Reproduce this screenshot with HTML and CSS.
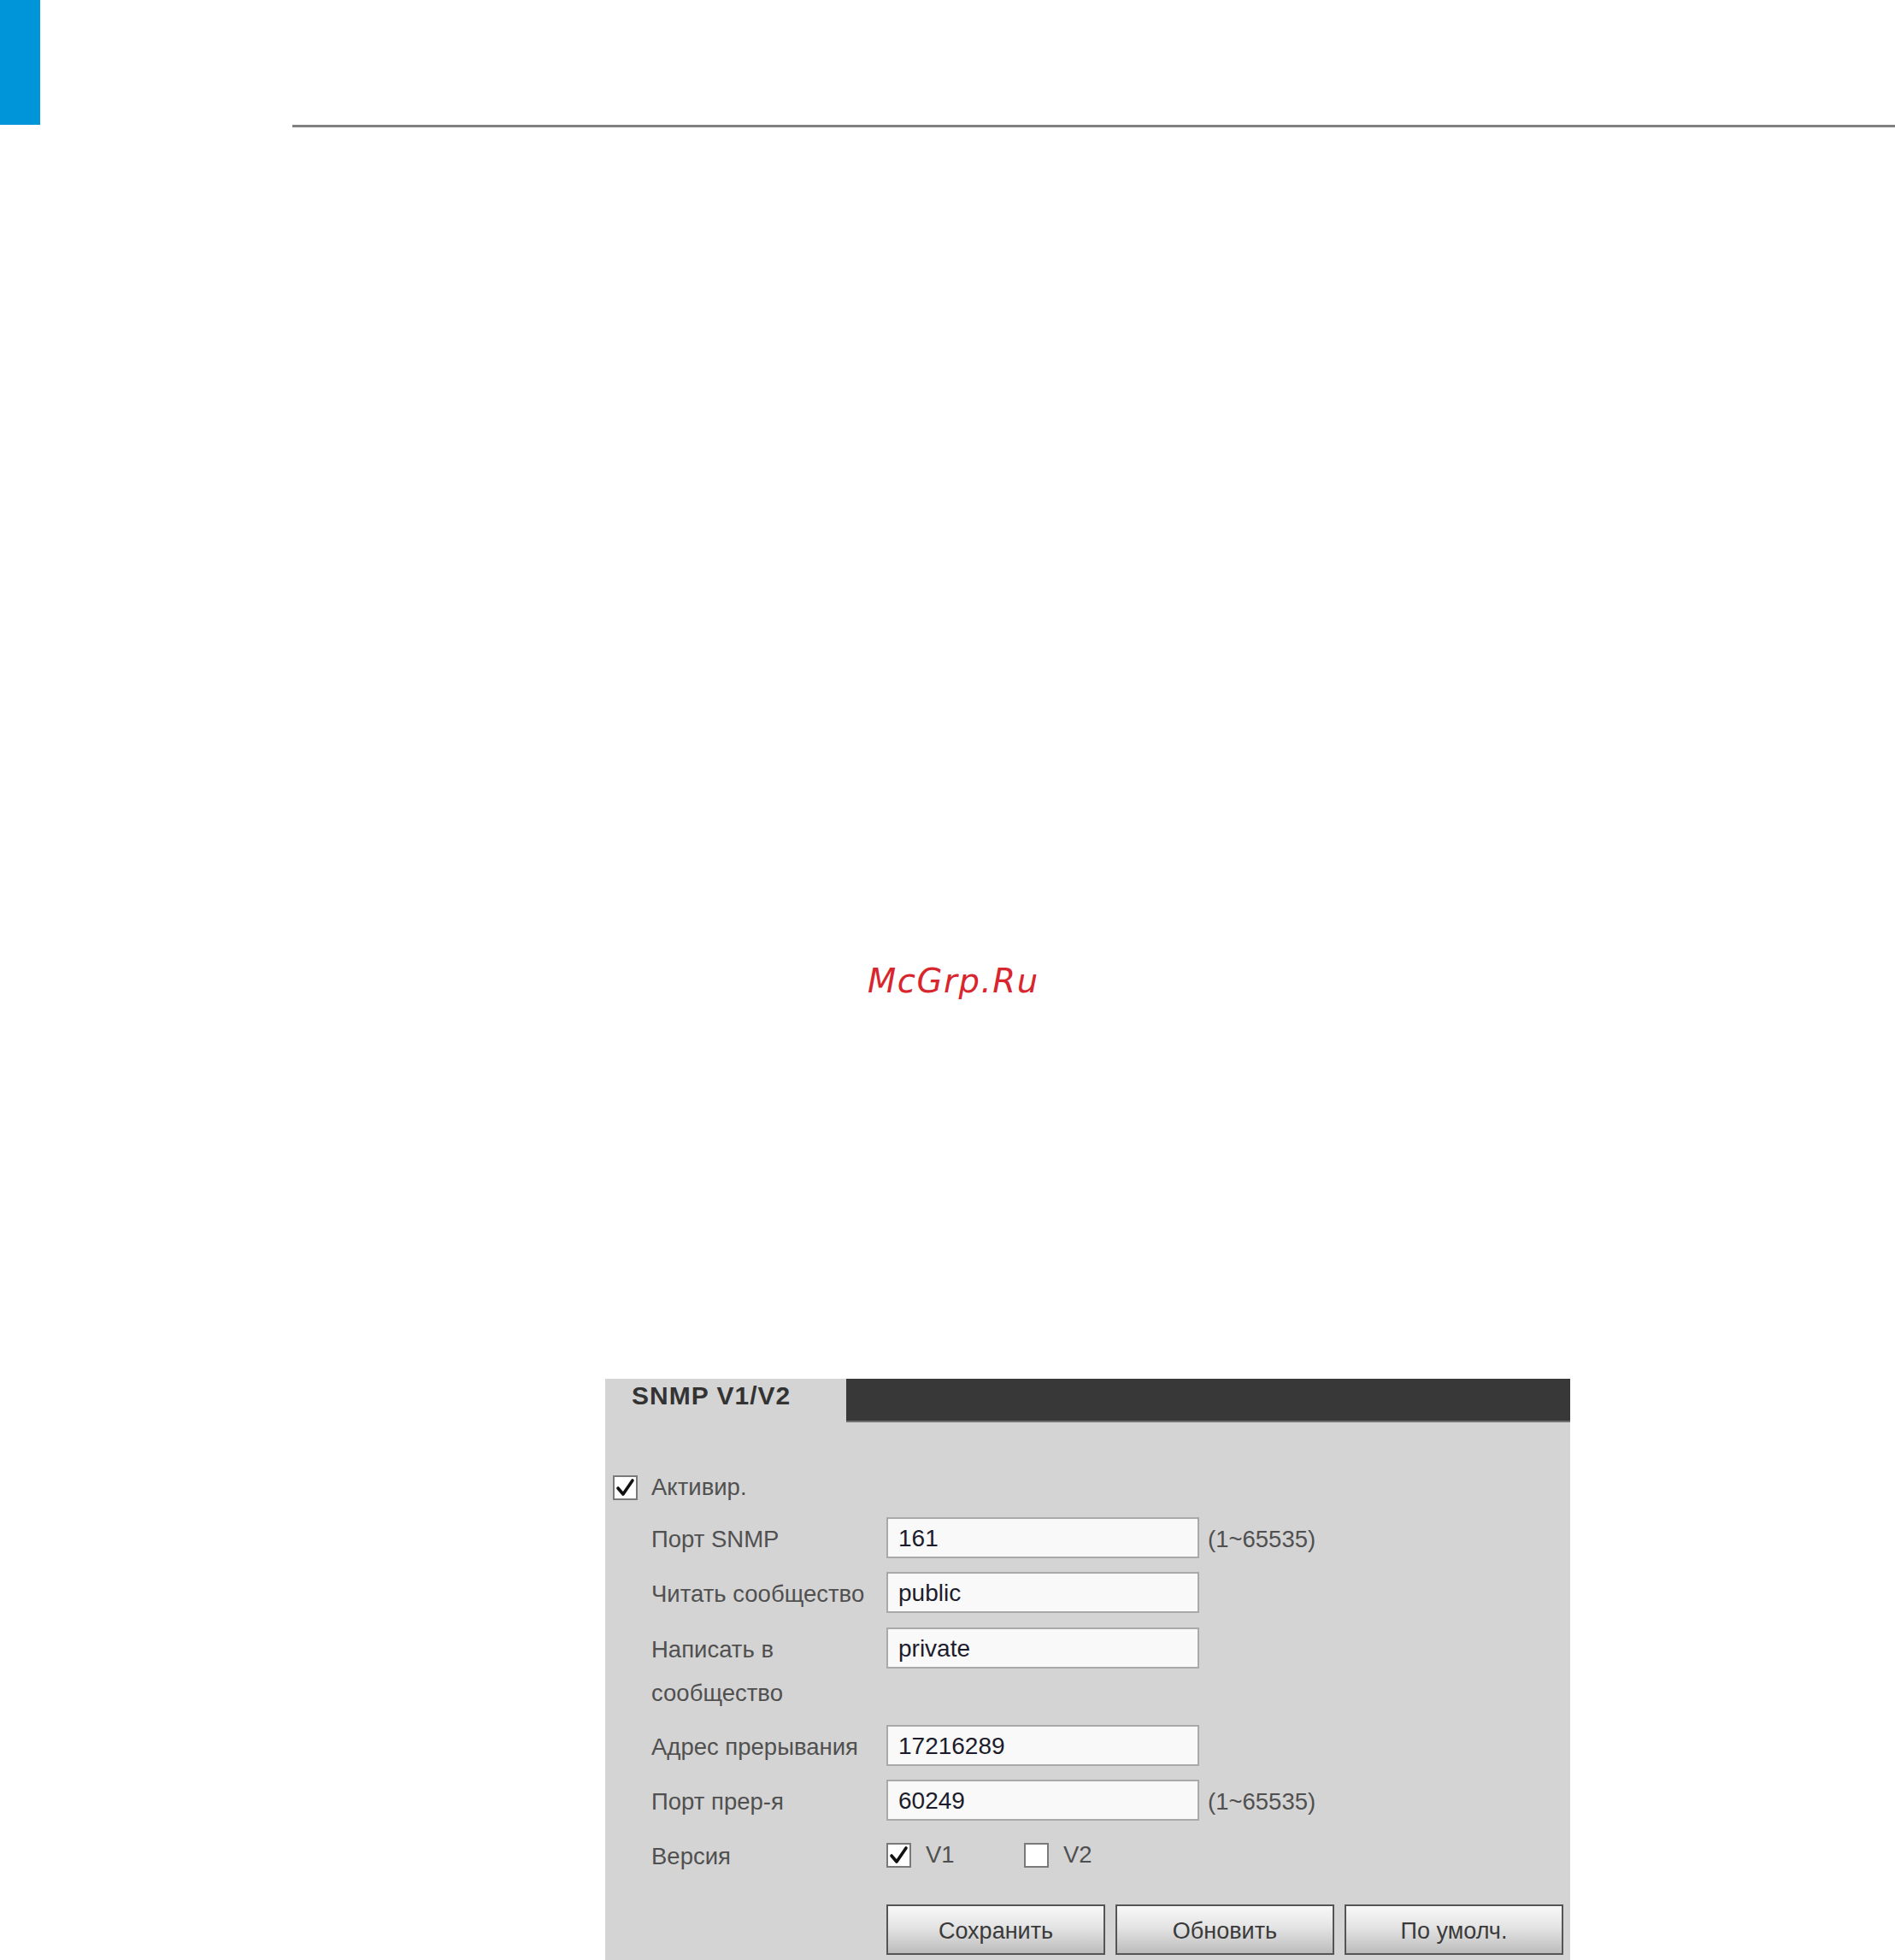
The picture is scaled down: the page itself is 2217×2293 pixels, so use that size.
FILE: index.html
```html
<!DOCTYPE html>
<html lang="ru">
<head>
    <meta charset="UTF-8">
    <title>SNMP V1/V2</title>
    <link rel="stylesheet" href="styles.css">
</head>
<body>
    <div class="header">
        <div class="brand"></div>
        <div class="rule"></div>
    </div>

    <div class="watermark">McGrp.Ru</div>

    <div class="panel">
        <div class="tabs">
            <div class="tab">SNMP V1/V2</div>
            <div class="tab-bar"></div>
        </div>

        <div class="form">
            <label class="enable">
                <span class="check">
                    <svg width="25" height="25" viewBox="0 0 25 25"><path d="M4 13 L10 20 L21 4" fill="none" stroke="#111" stroke-width="3.6" stroke-linecap="round" stroke-linejoin="round"/></svg>
                </span>
                <span>Активир.</span>
            </label>

            <div class="grid">
                <div class="label">Порт SNMP</div>
                <input class="field" type="text" value="161">
                <div class="hint">(1~65535)</div>

                <div class="label">Читать сообщество</div>
                <input class="field" type="text" value="public">
                <div class="hint"></div>

                <div class="label two">Написать в сообщество</div>
                <input class="field" type="text" value="private">
                <div class="hint"></div>

                <div class="label">Адрес прерывания</div>
                <input class="field" type="text" value="17216289">
                <div class="hint"></div>

                <div class="label">Порт прер-я</div>
                <input class="field" type="text" value="60249">
                <div class="hint">(1~65535)</div>

                <div class="label">Версия</div>
                <div class="versions">
                    <label class="option">
                        <span class="check">
                            <svg width="25" height="25" viewBox="0 0 25 25"><path d="M4 13 L10 20 L21 4" fill="none" stroke="#111" stroke-width="3.6" stroke-linecap="round" stroke-linejoin="round"/></svg>
                        </span>
                        <span>V1</span>
                    </label>
                    <label class="option">
                        <span class="check"></span>
                        <span>V2</span>
                    </label>
                </div>
                <div class="hint"></div>

                <div class="buttons">
                    <button class="btn">Сохранить</button>
                    <button class="btn">Обновить</button>
                    <button class="btn">По умолч.</button>
                </div>
            </div>
        </div>
    </div>
</body>
</html>
```

FILE: styles.css
```css
body {
    margin: 0;
    background: #fff;
    font-family: "Liberation Sans", Arial, sans-serif;
}
.header {
    display: flex;
    align-items: flex-start;
    height: 149px;
}
.brand {
    width: 47px;
    height: 146px;
    background: #0095d9;
}
.rule {
    flex: 1;
    height: 3px;
    margin-top: 146px;
    margin-left: 295px;
    background: #808080;
}
.watermark {
    margin-top: 980px;
    padding-left: 1015px;
    font-family: "DejaVu Sans", sans-serif;
    font-style: oblique;
    font-size: 38.5px;
    line-height: 38px;
    letter-spacing: 1.6px;
    color: #d7262e;
}
.panel {
    width: 1129px;
    margin: 446px 0 0 708px;
    background: #d4d4d4;
}
.tabs {
    display: flex;
    height: 51px;
}
.tab {
    width: 251px;
    padding: 5px 0 0 31px;
    font-size: 30px;
    line-height: 30px;
    font-weight: bold;
    letter-spacing: 1px;
    color: #333;
}
.tab-bar {
    flex: 1;
    background: #383838;
    border-bottom: 2px solid #707070;
}
.form {
    padding: 56px 0 30px 9px;
    font-size: 27.5px;
    color: #505050;
}
.enable {
    display: flex;
    align-items: center;
    gap: 16px;
    height: 40px;
    margin-bottom: 15px;
}
.check {
    display: inline-flex;
    align-items: center;
    justify-content: center;
    box-sizing: border-box;
    width: 29px;
    height: 29px;
    background: #fff;
    border: 2px solid #7a7a7a;
}
.grid {
    display: grid;
    grid-template-columns: 275px 366px 1fr;
    row-gap: 16.3px;
    margin-left: 45px;
}
.label {
    height: 48px;
    line-height: 44px;
    padding-top: 4px;
    box-sizing: border-box;
}
.label.two {
    height: 97.7px;
    line-height: 51px;
    padding-top: 0;
}
.field {
    box-sizing: border-box;
    width: 366px;
    height: 48px;
    margin: 0;
    padding: 2px 12px 0;
    border: 2px solid #a9a9a9;
    background: #f9f9f9;
    font-family: inherit;
    font-size: 28px;
    color: #1c1c2c;
}
.hint {
    padding: 4px 0 0 10px;
    line-height: 44px;
}
.versions {
    display: flex;
    align-items: center;
}
.option {
    display: flex;
    align-items: center;
    gap: 17px;
    width: 161px;
}
.buttons {
    grid-column: 2 / 4;
    display: flex;
    gap: 12px;
    margin-top: 17.5px;
}
.btn {
    box-sizing: border-box;
    width: 256px;
    height: 59px;
    border: 2px solid #555;
    background: linear-gradient(#f8f8f8, #e4e4e4 45%, #bcbcbc);
    font-family: inherit;
    font-size: 27px;
    color: #3a3a3a;
    padding: 5px 0 0;
}
```
